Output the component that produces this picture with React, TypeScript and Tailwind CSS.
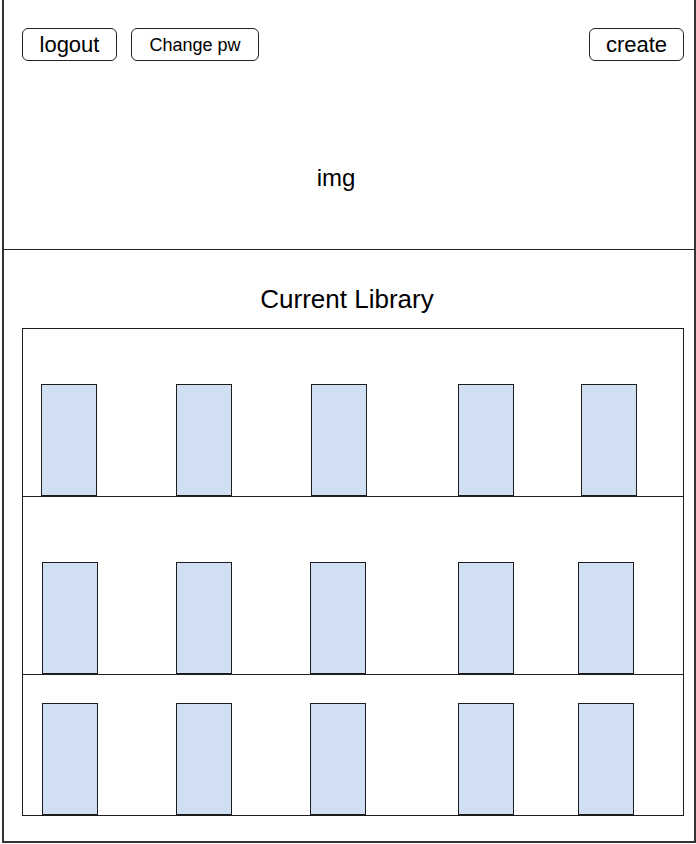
const rows = [
  { pad: "pt-[55px]", line: true, gaps: ["ml-[18px]", "ml-[79px]", "ml-[79px]", "ml-[91px]", "ml-[67px]"] },
  { pad: "pt-[65px]", line: true, gaps: ["ml-[19px]", "ml-[78px]", "ml-[78px]", "ml-[92px]", "ml-[64px]"] },
  { pad: "pt-[28px]", line: false, gaps: ["ml-[19px]", "ml-[78px]", "ml-[78px]", "ml-[92px]", "ml-[64px]"] },
]

function Book({ gap }: { gap: string }) {
  return <div className={`${gap} w-[56px] h-[112px] shrink-0 bg-[#d0e0f2] border border-[#1c1c1c]`} />
}

function Shelf({ pad, line, gaps }: { pad: string; line: boolean; gaps: string[] }) {
  return (
    <div className={`${pad} flex ${line ? "border-b border-[#222]" : ""}`}>
      {gaps.map((g, i) => (
        <Book key={i} gap={g} />
      ))}
    </div>
  )
}

export default function App() {
  return (
    <div className="w-[696px] h-[844px] bg-white overflow-hidden font-['Liberation_Sans',Arial,sans-serif] text-black">
      <div className="ml-[2px] w-[694px] h-[843px] border-x-2 border-b-2 border-[#333] flex flex-col">
        {/* header */}
        <div className="h-[249px] shrink-0">
          <div className="flex items-center pt-[28px] pl-[18px] pr-[10px]">
            <button className="w-[95px] h-[33px] border border-[#222] rounded-[6px] text-[22px] leading-none">
              logout
            </button>
            <button className="ml-[14px] w-[128px] h-[33px] border border-[#222] rounded-[6px] text-[18px] leading-none">
              Change pw
            </button>
            <button className="ml-auto w-[95px] h-[33px] border border-[#222] rounded-[6px] text-[22px] leading-none">
              create
            </button>
          </div>
          <div className="mt-[103px] pr-[26px] text-center text-[24px] leading-[28px]">img</div>
        </div>

        {/* library */}
        <div className="flex-1 border-t border-[#222]">
          <div className="h-[78px] pt-[20px] flex items-center justify-center pr-[4px] text-[26px]">
            Current Library
          </div>
          <div className="ml-[18px] w-[662px] h-[488px] border border-[#1c1c1c]">
            {rows.map((r, i) => (
              <Shelf key={i} {...r} />
            ))}
          </div>
        </div>
      </div>
    </div>
  )
}
